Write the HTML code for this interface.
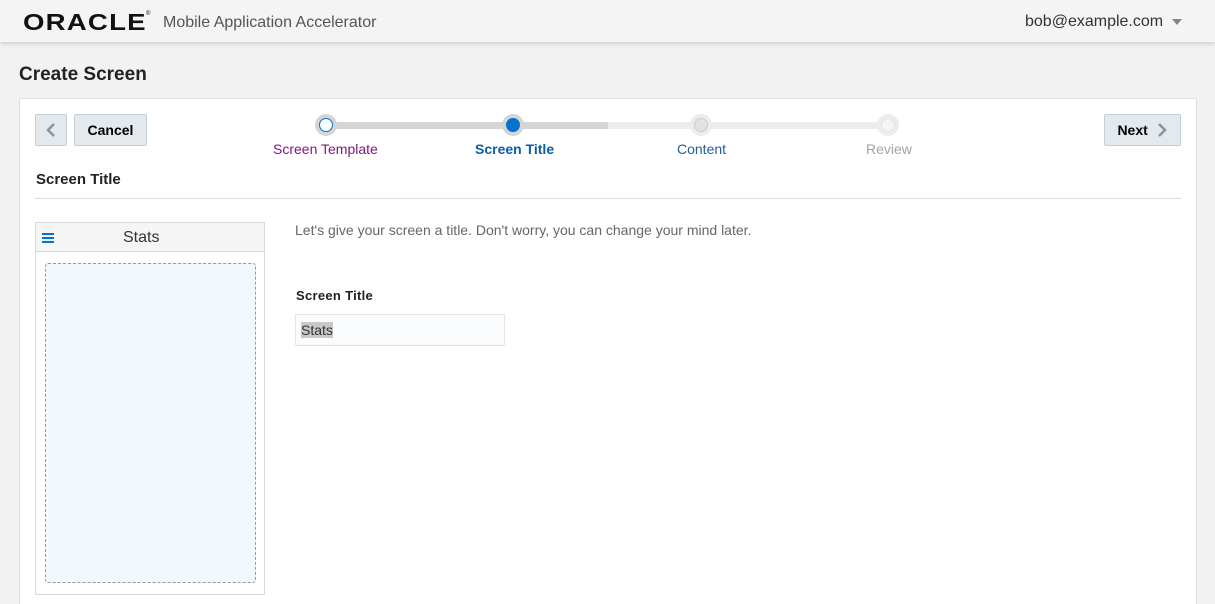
<!DOCTYPE html>
<html><head><meta charset="utf-8"><style>
*{box-sizing:border-box;margin:0;padding:0}
html,body{width:1215px;height:604px;overflow:hidden}
body{background:#f2f2f2;font-family:"Liberation Sans",Arial,sans-serif;position:relative}
.hdr{position:absolute;left:0;top:0;width:1215px;height:42px;background:#f4f4f4;box-shadow:0 2px 4px rgba(0,0,0,.15)}
.abs{position:absolute}
.btn{position:absolute;height:32px;border:1px solid #c4ced7;border-radius:2px;background:#e4e9ed;font-weight:bold;font-size:14px;color:#000;display:flex;align-items:center;justify-content:center}
.dot{position:absolute;width:22px;height:22px;border-radius:50%;top:114px}
</style></head><body>
<div class="hdr">
  <div class="abs" style="left:23px;top:9px;font-size:23px;font-weight:bold;letter-spacing:1px;color:#111;transform:scaleX(1.2);transform-origin:left;">ORACLE</div>
  <div class="abs" style="left:146px;top:11px;font-size:6px;color:#111">®</div>
  <div class="abs" style="left:163px;top:14px;font-size:16px;color:#555">Mobile Application Accelerator</div>
  <div class="abs" style="left:1025px;top:13px;font-size:16px;color:#333">bob@example.com</div>
  <div class="abs" style="left:1172px;top:19px;width:0;height:0;border-left:5px solid transparent;border-right:5px solid transparent;border-top:6px solid #7a8590"></div>
</div>
<div class="abs" style="left:19px;top:64px;font-size:19px;font-weight:bold;color:#222">Create Screen</div>
<div class="abs" style="left:19px;top:98px;width:1178px;height:520px;background:#fff;border:1px solid #dde1e5"></div>
<div class="btn" style="left:35px;top:114px;width:32px;"><svg width="12" height="16" viewBox="0 0 12 16"><path d="M9 2 L3 8 L9 14" fill="none" stroke="#8a949c" stroke-width="2.5"/></svg></div>
<div class="btn" style="left:74px;top:114px;width:73px;">Cancel</div>
<div class="btn" style="left:1104px;top:114px;width:77px;">Next&nbsp;&nbsp;<svg width="12" height="16" viewBox="0 0 12 16"><path d="M3 2 L9 8 L3 14" fill="none" stroke="#8a949c" stroke-width="2.5"/></svg></div>
<div class="abs" style="left:326px;top:122px;width:282px;height:7px;background:#d4d5d6"></div>
<div class="abs" style="left:608px;top:122px;width:280px;height:7px;background:#ececec"></div>
<div class="dot" style="left:315px;background:#d4d5d6"><div style="margin:4px;width:14px;height:14px;border-radius:50%;background:#fff;border:1.5px solid #0572ce"></div></div>
<div class="dot" style="left:502px;background:#d4d5d6"><div style="margin:4px;width:14px;height:14px;border-radius:50%;background:#0572ce"></div></div>
<div class="dot" style="left:690px;background:#ececec"><div style="margin:4px;width:14px;height:14px;border-radius:50%;background:#e0e3e6;border:1px solid #c8cdd2"></div></div>
<div class="dot" style="left:877px;background:#ececec"><div style="margin:4px;width:14px;height:14px;border-radius:50%;background:#f4f5f6;border:1px solid #e0e3e6"></div></div>
<div class="abs" style="left:273px;top:141px;font-size:14px;color:#80177f">Screen Template</div>
<div class="abs" style="left:475px;top:141px;font-size:14px;color:#0a5ea8;font-weight:bold">Screen Title</div>
<div class="abs" style="left:677px;top:141px;font-size:14px;color:#275d90">Content</div>
<div class="abs" style="left:866px;top:141px;font-size:14px;color:#9ea4a9">Review</div>
<div class="abs" style="left:36px;top:171px;font-size:15px;font-weight:bold;color:#222">Screen Title</div>
<div class="abs" style="left:35px;top:198px;width:1146px;height:1px;background:#d4dde3"></div>
<div class="abs" style="left:35px;top:222px;width:230px;height:373px;border:1px solid #d8d8d8;background:#fff"></div>
<div class="abs" style="left:36px;top:223px;width:228px;height:29px;background:#f5f5f5;border-bottom:1px solid #d8d8d8"></div>
<div class="abs" style="left:42px;top:233px;width:12px;height:2px;background:#0572ce;box-shadow:0 4px 0 #0572ce,0 8px 0 #0572ce"></div>
<div class="abs" style="left:123px;top:229px;font-size:16px;color:#333">Stats</div>
<div class="abs" style="left:45px;top:263px;width:211px;height:320px;border:1px dashed #999;border-radius:3px;background:#f2f8fe"></div>
<div class="abs" style="left:295px;top:222px;font-size:14px;color:#666">Let's give your screen a title. Don't worry, you can change your mind later.</div>
<div class="abs" style="left:296px;top:288px;font-size:13px;font-weight:bold;color:#222;letter-spacing:.3px">Screen Title</div>
<div class="abs" style="left:295px;top:314px;width:210px;height:32px;border:1px solid #dfe4e8;border-radius:2px;background:#fbfcfd"></div>
<div class="abs" style="left:301px;top:322px;font-size:14px;color:#333;background:#c8c8c8;line-height:16px">Stats</div>
</body></html>
